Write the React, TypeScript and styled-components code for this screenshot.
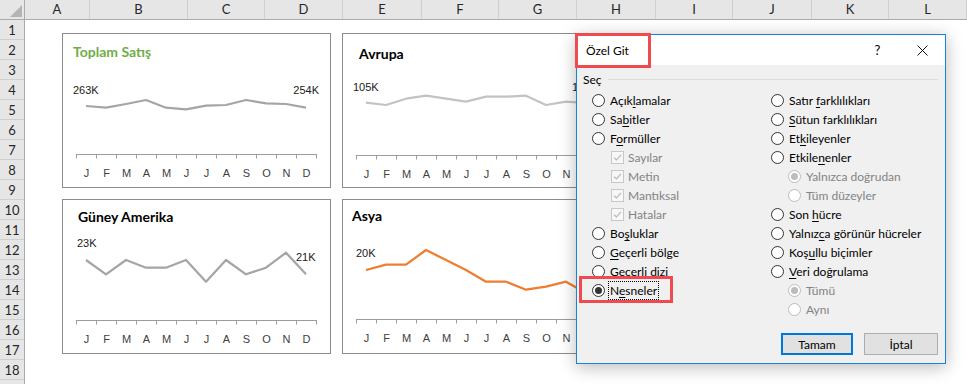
import styled, { createGlobalStyle } from "styled-components";
import type { ReactNode } from "react";

const GlobalStyle = createGlobalStyle`
  html, body {
    margin: 0;
    padding: 0;
    background: #ffffff;
  }
  body {
    width: 967px;
    height: 384px;
    overflow: hidden;
    font-family: "Liberation Sans", Arial, sans-serif;
  }
`;

const Sheet = styled.div`
  position: relative;
  width: 967px;
  height: 384px;
  overflow: hidden;
  background: #fff;
`;

const ColumnBar = styled.div`
  display: flex;
  height: 20px;
  box-sizing: border-box;
  background: #e6e6e6;
  border-bottom: 1px solid #ababab;
`;

const Corner = styled.div`
  width: 25px;
  flex: none;
  box-sizing: border-box;
  border-right: 1px solid #ababab;
  display: flex;
  align-items: flex-end;
  justify-content: flex-end;
  padding: 0 2px 2px 0;
  span {
    width: 12px;
    height: 12px;
    background: #b4b4b4;
    clip-path: polygon(100% 0, 100% 100%, 0 100%);
  }
`;

const ColHead = styled.div<{ $w: number }>`
  width: ${(p) => p.$w}px;
  flex: none;
  box-sizing: border-box;
  border-right: 1px solid #cfcfcf;
  text-align: center;
  font-family: Lato, "Liberation Sans", sans-serif;
  font-size: 13px;
  line-height: 19px;
  color: #262626;
`;

const Body = styled.div`
  display: flex;
`;

const RowBar = styled.div`
  width: 25px;
  flex: none;
  display: flex;
  flex-direction: column;
  background: #e6e6e6;
  border-right: 1px solid #ababab;
  box-sizing: border-box;
`;

const RowHead = styled.div`
  height: 20px;
  box-sizing: border-box;
  border-bottom: 1px solid #cfcfcf;
  text-align: center;
  font-family: Lato, "Liberation Sans", sans-serif;
  font-size: 13px;
  line-height: 20px;
  color: #262626;
`;

const Cells = styled.div`
  flex: 1;
  padding: 13px 0 0 37px;
`;

const ChartGrid = styled.div`
  display: grid;
  grid-template-columns: 269px 269px;
  gap: 11px;
`;

const Card = styled.div`
  width: 269px;
  height: 155px;
  box-sizing: border-box;
  border: 1px solid #8c8c8c;
  background: #fff;
  display: flex;
  flex-direction: column;
`;

const Title = styled.div<{ $x: number; $y: number; $color: string }>`
  height: 34px;
  box-sizing: border-box;
  padding: ${(p) => p.$y}px 0 0 ${(p) => p.$x}px;
  font-family: Lato, "Liberation Sans", sans-serif;
  font-weight: 700;
  font-size: 14px;
  line-height: 18px;
  color: ${(p) => p.$color};
`;

const Plot = styled.svg`
  display: block;
  text {
    font-family: "Liberation Sans", Arial, sans-serif;
    font-size: 11px;
  }
`;

const Dialog = styled.div`
  position: absolute;
  left: 576px;
  top: 34px;
  width: 370px;
  height: 330px;
  box-sizing: border-box;
  border: 1px solid #1883d7;
  background: #f0f0f0;
  box-shadow: 0 3px 16px rgba(0, 0, 0, 0.28);
  display: flex;
  flex-direction: column;
  font-family: Lato, "Noto Sans", sans-serif;
  font-size: 12px;
  color: #000;
`;

const TitleBar = styled.div`
  height: 30px;
  flex: none;
  display: flex;
  align-items: center;
  background: #fff;
  padding-left: 9px;
`;

const TitleText = styled.div`
  flex: 1;
`;

const CaptionButton = styled.div`
  width: 45px;
  height: 30px;
  display: flex;
  align-items: center;
  justify-content: center;
  font-size: 13px;
`;

const DialogBody = styled.div`
  flex: 1;
  display: flex;
  flex-direction: column;
  padding: 7px 7px 0 6px;
`;

const Legend = styled.div`
  display: flex;
  align-items: center;
  height: 16px;
  line-height: 16px;
  i {
    flex: 1;
    height: 1px;
    background: #dcdcdc;
    margin: 0 0 2px 6px;
  }
`;

const Columns = styled.div`
  display: flex;
  margin-top: 3px;
  padding-left: 9px;
`;

const Column = styled.div<{ $w?: number }>`
  display: flex;
  flex-direction: column;
  width: ${(p) => (p.$w ? `${p.$w}px` : "auto")};
  flex: ${(p) => (p.$w ? "none" : 1)};
`;

const Option = styled.div<{ $indent: number; $disabled?: boolean }>`
  height: 19px;
  display: flex;
  align-items: center;
  padding-left: ${(p) => p.$indent}px;
  color: ${(p) => (p.$disabled ? "#838383" : "#000")};
  white-space: nowrap;
  u {
    text-underline-offset: 2px;
  }
`;

const Radio = styled.span<{ $checked?: boolean; $disabled?: boolean }>`
  width: 13px;
  height: 13px;
  flex: none;
  box-sizing: border-box;
  border-radius: 50%;
  border: 1px solid ${(p) => (p.$disabled ? "#bcbcbc" : "#333")};
  background: #fff;
  margin-right: 5px;
  display: flex;
  align-items: center;
  justify-content: center;
  &::after {
    content: "";
    display: ${(p) => (p.$checked ? "block" : "none")};
    width: 7px;
    height: 7px;
    border-radius: 50%;
    background: ${(p) => (p.$disabled ? "#bcbcbc" : "#333")};
  }
`;

const Check = styled.span`
  width: 13px;
  height: 13px;
  flex: none;
  box-sizing: border-box;
  border: 1px solid #c8c8c8;
  background: #f7f7f7;
  margin-right: 4px;
  display: flex;
  align-items: center;
  justify-content: center;
`;

const Focus = styled.span`
  outline: 1px dotted #000;
  outline-offset: 1px;
`;

const ButtonRow = styled.div`
  display: flex;
  justify-content: flex-end;
  gap: 11px;
  margin-top: 14px;
`;

const Button = styled.div<{ $w: number; $primary?: boolean }>`
  width: ${(p) => p.$w}px;
  height: 22px;
  box-sizing: border-box;
  background: #e1e1e1;
  border: ${(p) => (p.$primary ? "2px solid #0078d7" : "1px solid #adadad")};
  display: flex;
  align-items: center;
  justify-content: center;
`;

const Highlight = styled.div<{ $x: number; $y: number; $w: number; $h: number }>`
  position: absolute;
  left: ${(p) => p.$x}px;
  top: ${(p) => p.$y}px;
  width: ${(p) => p.$w}px;
  height: ${(p) => p.$h}px;
  box-sizing: border-box;
  border: 3px solid #ee4a4f;
  pointer-events: none;
`;

const columns: [string, number][] = [
  ["A", 65], ["B", 98], ["C", 77], ["D", 78], ["E", 79], ["F", 77],
  ["G", 78], ["H", 79], ["I", 77], ["J", 79], ["K", 77], ["L", 78],
];

const months = ["J", "F", "M", "A", "M", "J", "J", "A", "S", "O", "N", "D"];

interface ValueLabel {
  text: string;
  x: number;
  y: number;
  anchor?: "start" | "end";
}

interface ChartSpec {
  title: string;
  titleColor: string;
  titleX: number;
  titleY: number;
  line: string;
  axisY: number;
  points: number[];
  labels: ValueLabel[];
}

const charts: ChartSpec[] = [
  {
    title: "Toplam Satış",
    titleColor: "#70ad47",
    titleX: 10,
    titleY: 9,
    line: "#a5a5a5",
    axisY: 121.5,
    points: [73, 74.7, 71, 67, 74.7, 76.3, 72.7, 72, 67, 70.3, 71, 74.7],
    labels: [
      { text: "263K", x: 11, y: 57 },
      { text: "254K", x: 257, y: 57, anchor: "end" },
    ],
  },
  {
    title: "Avrupa",
    titleColor: "#000",
    titleX: 16,
    titleY: 11,
    line: "#c3c3c3",
    axisY: 122.5,
    points: [69.7, 72, 65.7, 62.7, 65.7, 68.7, 63.7, 63.7, 62.7, 72, 68.7, 70],
    labels: [
      { text: "105K", x: 11, y: 54 },
      { text: "106K", x: 230, y: 54 },
    ],
  },
  {
    title: "Güney Amerika",
    titleColor: "#000",
    titleX: 15,
    titleY: 8,
    line: "#a5a5a5",
    axisY: 121.5,
    points: [61, 75.3, 61, 68.7, 68.7, 61, 82.7, 61, 75.3, 68.7, 53.7, 75.3],
    labels: [
      { text: "23K", x: 15, y: 44 },
      { text: "21K", x: 234, y: 58 },
    ],
  },
  {
    title: "Asya",
    titleColor: "#000",
    titleX: 9,
    titleY: 7,
    line: "#ed7d31",
    axisY: 120.5,
    points: [71, 65.7, 65.7, 51, 61, 71, 82.7, 82.7, 90.7, 87.7, 82.7, 94],
    labels: [{ text: "20K", x: 14, y: 54 }],
  },
];

function Sparkline({ spec }: { spec: ChartSpec }) {
  const pts = spec.points.map((y, i) => `${24 + 20 * i},${y}`).join(" ");
  return (
    <Plot width={267} height={119} viewBox="1 35 267 119">
      <polyline
        points={pts}
        fill="none"
        stroke={spec.line}
        strokeWidth={2.25}
        strokeLinejoin="round"
      />
      <line x1={14} x2={255} y1={spec.axisY} y2={spec.axisY} stroke="#9c9c9c" />
      {Array.from({ length: 13 }, (_, i) => (
        <line
          key={i}
          x1={14.5 + 20 * i}
          x2={14.5 + 20 * i}
          y1={spec.axisY}
          y2={spec.axisY + 4}
          stroke="#9c9c9c"
        />
      ))}
      {months.map((m, i) => (
        <text
          key={i}
          x={24.5 + 20 * i}
          y={spec.axisY + 18}
          textAnchor="middle"
          dominantBaseline="central"
          fill="#404040"
        >
          {m}
        </text>
      ))}
      {spec.labels.map((l) => (
        <text
          key={l.text}
          x={l.x}
          y={l.y}
          textAnchor={l.anchor ?? "start"}
          dominantBaseline="central"
          fill="#1a1a1a"
        >
          {l.text}
        </text>
      ))}
    </Plot>
  );
}

interface Opt {
  kind: "radio" | "check" | "sub";
  label: ReactNode;
  disabled?: boolean;
  checked?: boolean;
  focus?: boolean;
}

const leftOpts: Opt[] = [
  { kind: "radio", label: <>Açık<u>l</u>amalar</> },
  { kind: "radio", label: <>Sa<u>b</u>itler</> },
  { kind: "radio", label: <>F<u>o</u>rmüller</> },
  { kind: "check", label: "Sayılar", disabled: true, checked: true },
  { kind: "check", label: "Metin", disabled: true, checked: true },
  { kind: "check", label: "Mantıksal", disabled: true, checked: true },
  { kind: "check", label: "Hatalar", disabled: true, checked: true },
  { kind: "radio", label: <>Bo<u>ş</u>luklar</> },
  { kind: "radio", label: <><u>G</u>eçerli bölge</> },
  { kind: "radio", label: <>Ge<u>c</u>erli dizi</> },
  { kind: "radio", label: <>N<u>e</u>sneler</>, checked: true, focus: true },
];

const rightOpts: Opt[] = [
  { kind: "radio", label: <>Satır <u>f</u>arklılıkları</> },
  { kind: "radio", label: <><u>S</u>ütun farklılıkları</> },
  { kind: "radio", label: <>Et<u>k</u>ileyenler</> },
  { kind: "radio", label: <>Etkile<u>n</u>enler</> },
  { kind: "sub", label: "Yalnızca doğrudan", disabled: true, checked: true },
  { kind: "sub", label: "Tüm düzeyler", disabled: true },
  { kind: "radio", label: <>Son <u>h</u>ücre</> },
  { kind: "radio", label: <>Yalnız<u>c</u>a görünür hücreler</> },
  { kind: "radio", label: <>Koş<u>u</u>llu biçimler</> },
  { kind: "radio", label: <><u>V</u>eri doğrulama</> },
  { kind: "sub", label: "Tümü", disabled: true, checked: true },
  { kind: "sub", label: "Aynı", disabled: true },
];

function OptionRow({ opt }: { opt: Opt }) {
  const indent = opt.kind === "check" ? 19 : opt.kind === "sub" ? 17 : 0;
  return (
    <Option $indent={indent} $disabled={opt.disabled}>
      {opt.kind === "check" ? (
        <Check>
          <svg width="9" height="9" viewBox="0 0 9 9">
            <path d="M1 4.6 L3.4 7 L8 1.8" fill="none" stroke="#b4b4b4" strokeWidth="1.1" />
          </svg>
        </Check>
      ) : (
        <Radio $checked={opt.checked} $disabled={opt.disabled} />
      )}
      {opt.focus ? <Focus>{opt.label}</Focus> : <span>{opt.label}</span>}
    </Option>
  );
}

export default function App() {
  return (
    <Sheet>
      <GlobalStyle />
      <ColumnBar>
        <Corner>
          <span />
        </Corner>
        {columns.map(([name, w]) => (
          <ColHead key={name} $w={w}>
            {name}
          </ColHead>
        ))}
      </ColumnBar>
      <Body>
        <RowBar>
          {Array.from({ length: 19 }, (_, i) => (
            <RowHead key={i}>{i < 18 ? i + 1 : ""}</RowHead>
          ))}
        </RowBar>
        <Cells>
          <ChartGrid>
            {charts.map((c) => (
              <Card key={c.title}>
                <Title $x={c.titleX} $y={c.titleY} $color={c.titleColor}>
                  {c.title}
                </Title>
                <Sparkline spec={c} />
              </Card>
            ))}
          </ChartGrid>
        </Cells>
      </Body>

      <Dialog>
        <TitleBar>
          <TitleText>Özel Git</TitleText>
          <CaptionButton>?</CaptionButton>
          <CaptionButton>
            <svg width="11" height="11" viewBox="0 0 11 11">
              <path d="M0.5 0.5 L10.5 10.5 M10.5 0.5 L0.5 10.5" stroke="#111" strokeWidth="1" />
            </svg>
          </CaptionButton>
        </TitleBar>
        <DialogBody>
          <Legend>
            Seç
            <i />
          </Legend>
          <Columns>
            <Column $w={179}>
              {leftOpts.map((o, i) => (
                <OptionRow key={i} opt={o} />
              ))}
            </Column>
            <Column>
              {rightOpts.map((o, i) => (
                <OptionRow key={i} opt={o} />
              ))}
            </Column>
          </Columns>
          <ButtonRow>
            <Button $w={72} $primary>
              Tamam
            </Button>
            <Button $w={74}>İptal</Button>
          </ButtonRow>
        </DialogBody>
        <Highlight $x={-2} $y={-2} $w={76} $h={35} />
        <Highlight $x={2} $y={241} $w={94} $h={27} />
      </Dialog>
    </Sheet>
  );
}
